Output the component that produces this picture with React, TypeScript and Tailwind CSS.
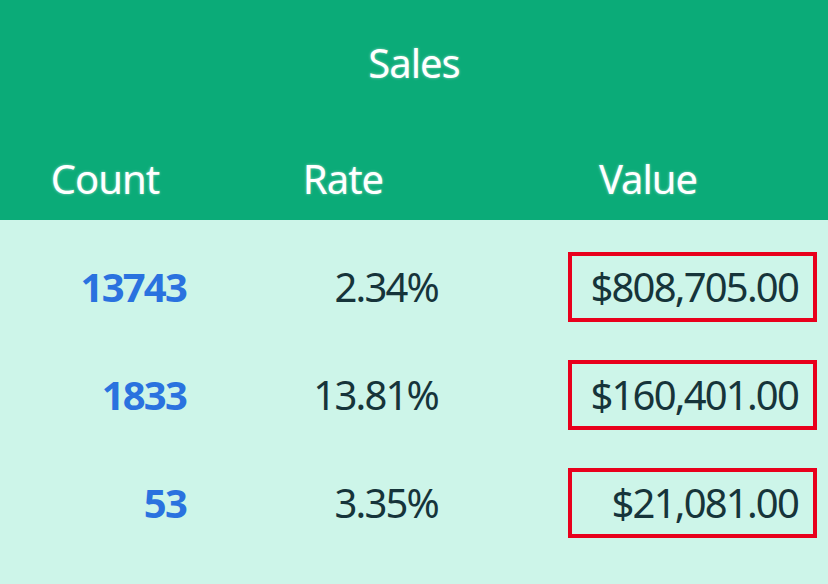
const rows = [
  { count: '13743', rate: '2.34%', value: '$808,705.00' },
  { count: '1833', rate: '13.81%', value: '$160,401.00' },
  { count: '53', rate: '3.35%', value: '$21,081.00' },
]

export default function App() {
  return (
    <div
      className="w-[828px] h-[584px] bg-[#cdf5e9] overflow-hidden"
      style={{ fontFamily: '"Noto Sans", "Open Sans", sans-serif' }}
    >
      {/* header */}
      <div className="h-[220px] bg-[#0bab78] text-white text-[40px] tracking-[-1px] [text-shadow:0_0_3px_rgba(255,255,255,0.5)]">
        <div className="h-[130px] flex items-center justify-center pb-[4px]">Sales</div>
        <div className="grid grid-cols-[210px_266px_1fr] h-[90px] items-start">
          <div className="text-center leading-[50px] pt-[24px]">Count</div>
          <div className="text-center leading-[50px] pt-[24px]">Rate</div>
          <div className="text-center leading-[50px] pt-[24px] pr-[8px]">Value</div>
        </div>
      </div>

      {/* body */}
      <div className="pt-[13px] text-[40px] tracking-[-1.8px] text-[#16343a]">
        {rows.map((r) => (
          <div key={r.count} className="grid grid-cols-[210px_266px_1fr] h-[108px] items-center">
            <div className="text-right pr-[24px] font-bold text-[#2a72df]">{r.count}</div>
            <div className="text-right pr-[38px]">{r.rate}</div>
            <div className="flex justify-end pr-[11px]">
              <div className="w-[249px] h-[70px] border-[4px] border-[#e8001c] flex items-center justify-end pr-[15px]">
                {r.value}
              </div>
            </div>
          </div>
        ))}
      </div>
    </div>
  )
}
